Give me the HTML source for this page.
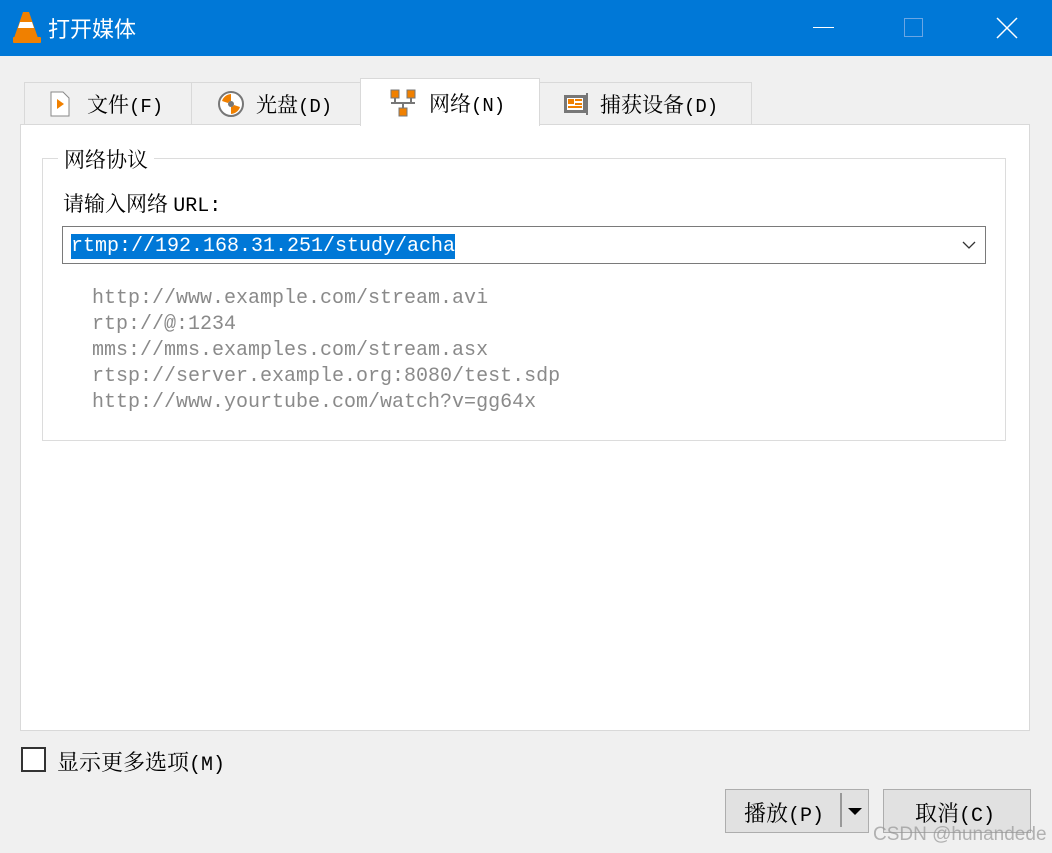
<!DOCTYPE html>
<html><head><meta charset="utf-8"><style>
*{margin:0;padding:0;box-sizing:border-box}
body{width:1052px;height:853px;background:#f0f0f0;position:relative;overflow:hidden;font-family:"Liberation Serif","Noto Serif CJK SC",serif;font-size:20px;color:#000}
.abs{position:absolute}
.title{left:0;top:0;width:1052px;height:56px;background:#0078d7;color:#fff}
.tab{position:absolute;top:82px;height:43px;background:#f0f0f0;border:1px solid #d9d9d9;display:flex;align-items:center;font-size:21px}
.mono{font-family:"Liberation Mono",monospace}
.p{font-family:"Liberation Mono",monospace;font-size:19px}
</style></head><body>
<div class="abs title">
<svg class="abs" style="left:12px;top:10px" width="30" height="34" viewBox="0 0 30 34"><path d="M11 2h6l9 26H2z" fill="#f08000"/><path d="M8 12h12l2 6H6z" fill="#fff"/><rect x="1" y="27" width="28" height="6" rx="1" fill="#f08000"/></svg>
<div class="abs" style="left:48px;top:12px;font-family:'Liberation Sans','Noto Sans CJK SC',sans-serif;font-size:22px">打开媒体</div>
<div class="abs" style="left:813px;top:27px;width:21px;height:1px;background:#fff"></div>
<div class="abs" style="left:904px;top:18px;width:19px;height:19px;border:1px solid #6aa6e4"></div>
<svg class="abs" style="left:996px;top:17px" width="22" height="22"><path d="M1 1L21 21M21 1L1 21" stroke="#fff" stroke-width="1.5"/></svg>
</div>
<div class="abs" style="left:20px;top:124px;width:1010px;height:607px;background:#fff;border:1px solid #d9d9d9"></div>
<div class="tab" style="left:24px;width:168px"><svg style="margin-left:24px" width="22" height="26"><path d="M2 1h12l6 6v18H2z" fill="#fff" stroke="#888"/><path d="M8 8l7 5-7 5z" fill="#f08000"/></svg><span style="margin-left:16px">文件<span class="p">(F)</span></span></div>
<div class="tab" style="left:191px;width:170px"><svg style="margin-left:26px" width="26" height="26"><circle cx="13" cy="13" r="12" fill="#fff" stroke="#777" stroke-width="2"/><path d="M13 3a10 10 0 0 0-9 7l6 2a4 4 0 0 1 3-2z" fill="#f08000"/><path d="M13 23a10 10 0 0 0 9-7l-6-2a4 4 0 0 1-3 2z" fill="#f08000"/><circle cx="13" cy="13" r="3" fill="#777"/></svg><span style="margin-left:12px">光盘<span class="p">(D)</span></span></div>
<div class="tab" style="left:360px;top:78px;width:180px;height:48px;background:#fff;border-bottom:none"><svg style="margin-left:28px" width="30" height="30"><rect x="2" y="2" width="8" height="8" fill="#f08000" stroke="#777"/><rect x="18" y="2" width="8" height="8" fill="#f08000" stroke="#777"/><path d="M6 10v5h16v-5M14 15v5M2 15h24" stroke="#777" stroke-width="2" fill="none"/><rect x="10" y="20" width="8" height="8" fill="#f08000" stroke="#777"/></svg><span style="margin-left:10px">网络<span class="p">(N)</span></span></div>
<div class="tab" style="left:539px;width:213px"><svg style="margin-left:22px" width="28" height="26"><rect x="2" y="4" width="22" height="18" fill="#777"/><rect x="5" y="7" width="16" height="12" fill="#fff"/><rect x="6" y="8" width="6" height="5" fill="#f08000"/><rect x="13" y="8" width="7" height="2" fill="#f08000"/><rect x="13" y="12" width="7" height="2" fill="#f08000"/><rect x="6" y="15" width="14" height="2" fill="#f08000"/><rect x="24" y="2" width="2" height="22" fill="#777"/></svg><span style="margin-left:10px">捕获设备<span class="p">(D)</span></span></div>
<div class="abs" style="left:42px;top:158px;width:964px;height:283px;border:1px solid #dcdcdc"></div>
<div class="abs" style="left:58px;top:144px;background:#fff;padding:0 6px;font-size:21px">网络协议</div>
<div class="abs" style="left:63px;top:188px;font-size:21px">请输入网络 <span class="mono" style="font-size:20px">URL:</span></div>
<div class="abs" style="left:62px;top:226px;width:924px;height:38px;border:1px solid #7a7a7a;background:#fff"></div>
<div class="abs mono" style="left:71px;top:234px;height:25px;line-height:26px;background:#0078d7;color:#fff;font-size:20px">rtmp://192.168.31.251/study/acha</div>
<svg class="abs" style="left:962px;top:240px" width="14" height="10"><path d="M1 2l6 6 6-6" stroke="#333" fill="none" stroke-width="1.3"/></svg>
<div class="abs mono" style="left:92px;top:286px;color:#8a8a8a;font-size:20px;line-height:26px">http://www.example.com/stream.avi<br>rtp://@:1234<br>mms://mms.examples.com/stream.asx<br>rtsp://server.example.org:8080/test.sdp<br>http://www.yourtube.com/watch?v=gg64x</div>
<div class="abs" style="left:21px;top:747px;width:25px;height:25px;border:2px solid #333;background:#fff"></div>
<div class="abs" style="left:57px;top:746px;font-size:22px">显示更多选项<span class="p" style="font-size:20px">(M)</span></div>
<div class="abs" style="left:725px;top:789px;width:144px;height:44px;background:#e1e1e1;border:1px solid #adadad"></div>
<div class="abs" style="left:744px;top:797px;font-size:22px">播放<span class="p" style="font-size:20px">(P)</span></div>
<div class="abs" style="left:840px;top:793px;width:2px;height:34px;background:#999"></div>
<svg class="abs" style="left:848px;top:808px" width="14" height="8"><path d="M0 0h14L7 7z" fill="#000"/></svg>
<div class="abs" style="left:883px;top:789px;width:148px;height:44px;background:#e1e1e1;border:1px solid #adadad"></div>
<div class="abs" style="left:915px;top:797px;font-size:22px">取消<span class="p" style="font-size:20px">(C)</span></div>
<div class="abs" style="left:873px;top:824px;font-family:'Liberation Sans',sans-serif;font-size:19px;color:rgba(150,150,150,0.7)">CSDN @hunandede</div>
</body></html>
